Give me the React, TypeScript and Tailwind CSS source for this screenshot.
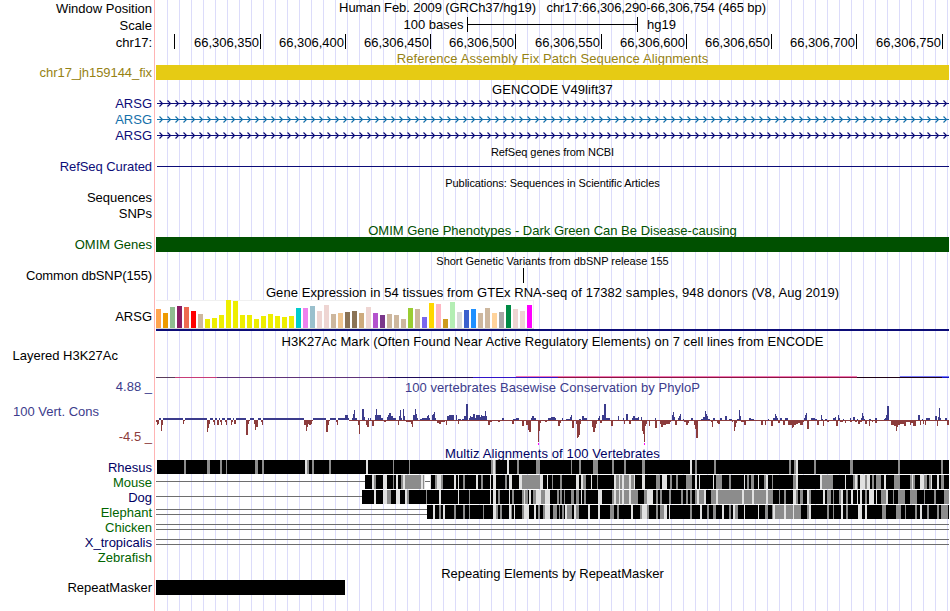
import type { ReactNode } from 'react';
import { clsx } from 'clsx';

// Tracks share one x axis: user units are browser pixels, starting at TRACK_X
const TRACK_X = 155;
const TRACK_W = 795;
const RIGHT = 949;

const NAVY = '#0c0c78';

const TICKS = [
  { x: 174, label: '' },
  { x: 260, label: '66,306,350' },
  { x: 345, label: '66,306,400' },
  { x: 430, label: '66,306,450' },
  { x: 515, label: '66,306,500' },
  { x: 601, label: '66,306,550' },
  { x: 686, label: '66,306,600' },
  { x: 771, label: '66,306,650' },
  { x: 856, label: '66,306,700' },
  { x: 942, label: '66,306,750' },
];

// one entry per GTEx tissue: [height, colour]
const TISSUES: [number, string][] = [
  [19, '#ffa54f'], [15, '#ee9a00'], [21, '#8fbc8f'], [22, '#8b1c62'], [21, '#ee6a50'], [17, '#ff0000'],
  [14, '#cdb79e'], [9, '#eeee00'], [10, '#eeee00'], [13, '#eeee00'], [28, '#eeee00'], [27, '#eeee00'],
  [13, '#eeee00'], [13, '#eeee00'], [9, '#eeee00'], [12, '#eeee00'], [14, '#eeee00'], [12, '#eeee00'],
  [11, '#eeee00'], [12, '#eeee00'], [20, '#00cdcd'], [20, '#ee82ee'], [22, '#9ac0cd'], [17, '#eed5d2'],
  [23, '#eed5d2'], [14, '#cdb79e'], [15, '#eec591'], [16, '#8b7355'], [17, '#8b7355'], [15, '#cdaa7d'],
  [21, '#eed5d2'], [15, '#b452cd'], [13, '#7a378b'], [14, '#cdb79e'], [13, '#cdb79e'], [9, '#cdb79e'],
  [20, '#9acd32'], [19, '#cdb79e'], [11, '#7a67ee'], [25, '#ffd700'], [24, '#ffb6c1'], [9, '#cd9b1d'],
  [26, '#b4eeb4'], [16, '#d9d9d9'], [18, '#3a5fcd'], [19, '#1e90ff'], [15, '#cdb79e'], [20, '#cdb79e'],
  [15, '#ffd39b'], [16, '#a6a6a6'], [23, '#008b45'], [19, '#eed5d2'], [17, '#eed5d2'], [23, '#ff00ff'],
];

// [x, width, colour]
const H3K27AC: [number, number, string][] = [
  [156, 19, '#5a3c5a'], [175, 42, '#c83c78'], [217, 171, '#5f3278'], [388, 85, '#1e0a5a'],
  [473, 85, '#3214c8'], [558, 299, '#8c1440'], [857, 85, '#1e0014'], [942, 7, '#1414c8'],
];

// "x,width,height" triples
const CONS_UP = `159,2,2 163,20,2 185,22,2 210,3,2 215,2,2 219,1,2 222,3,2 227,4,2 233,1,2 236,10,2 250,4,2 258,3,2
263,41,2 313,13,2 330,6,2 338,7,2 345,3,5 348,1,2 352,1,2 353,1,6 354,1,10 355,2,2 362,2,11 364,1,3 368,1,2 370,1,2
375,1,5 376,1,11 377,4,5 381,2,2 387,1,3 388,1,5 389,2,7 391,2,4 393,3,2 399,1,4 400,1,10 401,1,2 403,1,11 404,1,4
413,2,5 415,1,11 416,1,6 417,1,2 420,2,1 422,5,2 427,1,4 428,1,5 429,1,2 432,1,5 433,1,6 434,1,8 435,1,2 447,2,4
449,5,5 456,1,5 458,3,1 462,2,1 464,2,4 466,2,16 469,1,2 470,1,4 471,2,3 473,2,6 475,1,2 476,4,5 480,1,3 481,1,5
482,3,4 485,1,9 486,1,4 502,2,2 513,3,1 516,3,2 531,1,2 532,2,4 534,2,2 548,3,2 551,4,3 555,1,2 562,1,2 566,4,1
570,1,3 571,1,5 579,2,1 582,2,4 584,3,2 598,1,2 599,1,4 602,2,5 604,2,16 606,4,2 618,1,4 623,1,2 626,2,6 632,1,2
633,2,4 635,3,2 638,1,3 641,1,3 655,1,2 672,1,5 673,1,8 674,1,3 678,1,2 679,1,4 680,1,6 683,1,1 691,2,2 701,2,1
703,2,3 705,1,9 706,1,6 707,1,4 708,2,1 713,2,2 720,2,2 725,2,4 729,3,1 737,2,1 739,1,10 740,1,4 749,2,2 751,3,1
768,1,1 773,2,2 775,1,6 776,1,4 777,1,2 780,2,2 785,3,2 804,1,2 805,1,5 806,1,7 811,4,2 815,2,1 821,1,5 822,1,1
825,2,1 833,2,2 835,1,3 838,1,5 839,1,2 843,1,1 850,1,2 853,2,3 857,1,1 861,1,2 862,1,7 863,1,4 864,1,1 869,2,1
875,2,2 884,1,1 885,1,2 886,1,5 887,2,14 918,2,5 922,1,1 926,4,2 935,2,4 938,1,3 939,1,12 940,1,2 945,2,2`;

const CONS_DOWN = `156,1,2 157,1,5 158,1,4 161,1,11 162,1,5 183,1,4 184,1,1 207,1,12 208,1,8 209,1,4 213,1,2 214,1,5
217,2,5 220,1,2 221,1,5 225,1,2 226,1,5 231,1,5 232,1,2 234,2,4 246,2,15 248,1,4 249,1,1 254,1,4 255,1,10 256,2,7
261,1,2 262,1,5 304,2,5 306,1,11 307,1,7 308,1,4 309,2,5 311,1,4 312,1,1 326,2,12 328,1,5 329,1,1 336,1,2 337,1,5
358,1,5 359,1,14 366,1,5 367,2,7 372,2,6 384,2,2 398,1,5 406,5,2 411,1,4 412,1,7 437,2,3 439,2,4 441,4,2 446,1,5
458,1,4 488,2,5 490,2,2 498,2,2 512,2,4 522,2,6 526,2,5 528,1,10 529,2,12 538,1,22 539,1,11 540,1,3 545,2,2
558,2,6 560,1,3 572,2,8 576,1,4 577,1,18 578,1,17 579,1,15 580,1,4 592,1,7 593,2,12 595,1,8 596,1,4 600,2,3
611,2,6 624,1,4 629,2,4 642,1,11 643,1,14 644,1,22 645,1,6 646,1,4 649,1,6 655,2,8 660,1,4 661,2,7 663,3,5
666,4,4 670,1,2 675,2,5 684,2,2 686,2,5 688,1,3 694,1,5 695,1,9 696,2,18 711,1,2 712,1,7 717,1,3 718,2,4 732,1,2
734,1,11 735,1,7 736,1,3 741,3,2 744,2,5 761,2,5 765,1,5 771,2,6 778,2,3 783,2,5 788,4,5 792,1,8 793,1,7 794,2,5
796,2,4 798,2,3 800,3,5 803,1,2 807,2,9 817,2,5 823,1,6 827,2,2 836,2,6 840,3,2 845,1,3 850,2,2 855,2,2 858,2,4
860,2,2 865,2,4 869,1,6 872,1,2 875,2,3 891,3,5 894,2,6 896,1,11 897,1,7 898,2,5 900,4,4 904,2,6 906,4,2 910,1,5
911,2,3 913,3,6 920,1,5 923,1,4 925,1,5 937,1,6 947,2,5`;

// mismatch columns, g = weak, l = very weak: "kind x,width"
const RHESUS = `g184,2 g207,3 g220,2 g226,1 g255,3 g262,2 l305,2 g307,2 g312,2 g329,2 l366,2 g393,1 g409,1 g491,2
l493,2 g495,1 l507,2 g517,2 g536,4 g571,1 g579,2 g593,5 g612,2 g624,2 g642,3 l690,2 g695,2 g714,2 g789,2 g794,2
l796,2 g814,2 g850,3 g898,2 g941,2`;

const MOUSE = `l372,2 g374,2 l383,4 g393,1 l396,2 g401,2 l403,2 g405,16 l421,2 g423,1 l424,1 w425,5 l430,1 g435,2
l437,4 g441,2 l454,2 l458,1 g463,2 l476,2 g481,2 l490,1 l493,3 g505,2 l509,3 l519,3 g522,18 l540,3 l547,1 g552,1
g560,2 l576,3 l581,2 g583,3 l591,1 g597,1 l614,2 g616,3 l619,1 g620,2 l622,2 g624,5 l629,2 g631,3 l634,1 l642,3
g656,4 l662,5 g670,2 g676,2 g686,6 l695,2 l699,1 l713,1 g716,6 g729,2 l744,1 g747,2 g751,3 l758,1 g764,2 l766,2
g772,1 g793,3 l796,2 l820,2 g822,11 l845,1 g853,2 l855,2 g857,1 l860,5 g865,2 l867,3 g872,2 g876,5 l884,2 g894,6
g910,2 l912,1 g913,2 l920,4 g924,3 g929,2 l931,1 l937,2 g941,3`;

const DOG = `l374,2 l383,4 g387,4 l396,4 l405,2 g407,2 g426,1 l439,2 l458,1 g469,1 l490,1 l493,3 g498,2 l509,1 g512,2
g522,2 l524,1 g525,3 l529,2 g533,3 l536,5 g541,4 l545,5 g557,2 g560,2 g564,1 g571,3 g576,3 l581,1 g584,2 l598,4
g612,2 l614,2 g616,3 l619,1 g620,2 l622,2 g624,5 l629,2 g631,7 g644,3 l647,6 g656,2 g660,2 g669,2 g681,2 g686,2
g690,2 g695,2 l697,2 g699,5 l704,2 g711,5 l716,2 g718,24 l742,2 g744,8 l752,2 g754,12 l766,2 g768,5 g779,1 g784,2
l793,3 g796,2 g800,3 l807,2 g809,2 l823,2 g827,4 g833,1 g839,2 l841,2 g846,2 l851,2 l857,1 l860,2 g865,2 l869,5
l876,1 g881,5 l886,2 g893,1 g898,7 g910,7 g924,1 g934,2 g944,5`;

const ELEPHANT = `l433,2 g439,2 l443,2 g454,2 g463,2 g469,1 g483,1 l493,3 g496,2 g500,2 l509,2 g511,1 l514,1 g522,2
l524,5 l534,2 g538,2 g543,2 l545,5 g553,4 g559,1 g562,2 l565,2 g567,5 l574,2 g576,3 l588,2 l598,2 g610,4 g617,2
l631,2 g640,2 l642,5 g647,2 g656,2 g660,4 l664,3 l669,1 g690,2 l700,2 g707,2 g713,3 l722,2 g729,2 l733,2 g735,3
l744,1 l758,1 g765,3 g772,1 l773,2 g775,9 l784,2 g786,7 l793,1 g794,7 g807,2 l809,2 g827,2 g833,1 l841,2 g846,2
l858,4 l865,2 g882,4 g896,5 g905,1 g915,2 l920,2 g927,2 g937,2 g941,7`;

const SHADES: Record<string, string> = { g: '#8c8c8c', l: '#e1e1e1', w: '#ffffff' };

const ARROWS = Array.from({ length: 99 }, (_, i) => 159.5 + i * 8).map(x => `M${x} 4.5l3 3l-3 3`).join('');

function triples(text: string) {
  return text.trim().split(/\s+/).map(t => t.split(',').map(Number));
}

interface RowProps {
  height: string;
  label?: string;
  labelClass?: string;
  children?: ReactNode;
}

/** One strip of the browser: name on the left, data on the right. */
function Row({ height, label, labelClass, children }: RowProps) {
  return (
    <div className={clsx('flex', height)}>
      <div className={clsx('w-[155px] shrink-0 text-right whitespace-pre', labelClass?.includes('pr-') ? '' : 'pr-[3px]', labelClass)}>
        {label}
      </div>
      <div className="w-[795px] shrink-0">{children}</div>
    </div>
  );
}

function Title({ height, className, children }: { height: string; className?: string; children: ReactNode }) {
  return (
    <Row height={height}>
      <div className={clsx('text-center whitespace-pre', className)}>{children}</div>
    </Row>
  );
}

function Plot({ height, children }: { height: number; children: ReactNode }) {
  return (
    <svg
      width={TRACK_W}
      height={height}
      viewBox={`${TRACK_X} 0 ${TRACK_W} ${height}`}
      className="block overflow-visible"
      shapeRendering="crispEdges"
    >
      {children}
    </svg>
  );
}

function Block({ from = 156, to = RIGHT, color }: { from?: number; to?: number; color: string }) {
  return (
    <Plot height={15}>
      <rect x={from} y={0} width={to - from} height={15} fill={color} />
    </Plot>
  );
}

function GeneTrack({ color }: { color: string }) {
  return (
    <Plot height={16}>
      <rect x={157} y={7} width={RIGHT - 157} height={1} fill={color} />
      <path d={ARROWS} fill="none" stroke={color} strokeWidth={1.15} shapeRendering="auto" />
    </Plot>
  );
}

function Alignment({ start, gaps, columns = '' }: { start?: number; gaps: number[]; columns?: string }) {
  return (
    <Plot height={15}>
      {start && (
        <>
          <rect x={start} y={0} width={RIGHT - start} height={14} fill="#000" />
          {columns.trim().split(/\s+/).map(c => {
            const [x, w] = c.slice(1).split(',').map(Number);
            return <rect key={c} x={x} y={0} width={w} height={14} fill={SHADES[c[0]]} />;
          })}
          {columns.includes('w425') && <rect x={425} y={6} width={5} height={1} fill="#6e6e6e" />}
        </>
      )}
      {gaps.map(y => (
        <rect key={y} x={156} y={y} width={(start ?? RIGHT) - 156} height={1} fill="#6e6e6e" />
      ))}
    </Plot>
  );
}

export default function App() {
  return (
    <div className="relative h-[611px] w-[950px] overflow-hidden bg-white font-['Liberation_Sans',Arial,sans-serif] text-[13px] leading-[15px] text-black">
      {/* guide lines */}
      <div className="absolute inset-y-0 left-[154px] w-px bg-[#ffb4b4]" />
      <div className="absolute inset-y-0 left-[156px] w-[793px] bg-[repeating-linear-gradient(to_right,transparent_0px,transparent_11px,#dcdcfa_11px,#dcdcfa_12px)]" />

      <div className="relative flex flex-col">
        {/* Position header */}
        <Row height="h-[17px]" label="Window Position" labelClass="pt-px">
          <div className="text-center tracking-[-0.09px] whitespace-pre">
            Human Feb. 2009 (GRCh37/hg19)   chr17:66,306,290-66,306,754 (465 bp)
          </div>
        </Row>
        <Row height="h-[17px]" label="Scale" labelClass="pt-px">
          <Plot height={17}>
            <text x={463.5} y={12} textAnchor="end">100 bases</text>
            <rect x={467} y={0} width={1} height={15} />
            <rect x={467} y={7} width={171} height={1} />
            <rect x={637} y={0} width={1} height={15} />
            <text x={647} y={12}>hg19</text>
          </Plot>
        </Row>
        <Row height="h-[16px]" label="chr17:" labelClass="pt-px">
          <Plot height={16}>
            {TICKS.map(({ x, label }) => (
              <g key={x}>
                <rect x={x} y={0} width={1} height={15} />
                {label && <text x={x - 1} y={13} textAnchor="end">{label}</text>}
              </g>
            ))}
          </Plot>
        </Row>

        <Title height="h-[15px]" className="pt-px tracking-[0.11px] text-[#968214]">
          Reference Assembly Fix Patch Sequence Alignments
        </Title>
        <Row height="h-[15px]" label="chr17_jh159144_fix" labelClass="tracking-[-0.06px] text-[#968214]">
          <Block color="#e6cb14" />
        </Row>

        <Title height="h-[16px]" className="pt-[2px] tracking-[0.05px]">GENCODE V49lift37</Title>
        <Row height="h-[16px]" label="ARSG" labelClass="text-[#0c0c78]"><GeneTrack color={NAVY} /></Row>
        <Row height="h-[16px]" label="ARSG" labelClass="text-[#1470aa]"><GeneTrack color="#1470aa" /></Row>
        <Row height="h-[16px]" label="ARSG" labelClass="text-[#0c0c78]"><GeneTrack color={NAVY} /></Row>

        <Title height="h-[15px]" className="pt-[1px] text-[11px] tracking-[-0.04px]">RefSeq genes from NCBI</Title>
        <Row height="h-[15px]" label="RefSeq Curated" labelClass="tracking-[-0.07px] text-[#0c0c78]">
          <Plot height={15}>
            <rect x={157} y={7} width={RIGHT - 157} height={1} fill={NAVY} />
          </Plot>
        </Row>

        <Title height="h-[16px]" className="pt-[2px] text-[11px] tracking-[-0.07px]">
          Publications: Sequences in Scientific Articles
        </Title>
        <Row height="h-[16px]" label="Sequences" />
        <Row height="h-[16px]" label="SNPs" />

        <Title height="h-[15px]" className="pt-px text-[#005000]">OMIM Gene Phenotypes - Dark Green Can Be Disease-causing</Title>
        <Row height="h-[15px]" label="OMIM Genes" labelClass="text-[#005000]">
          <Block color="#005000" />
        </Row>

        <Title height="h-[16px]" className="pt-[2px] text-[11px] tracking-[-0.02px]">
          Short Genetic Variants from dbSNP release 155
        </Title>
        <Row height="h-[16px]" label="Common dbSNP(155)" labelClass="tracking-[-0.11px]">
          <Block from={523} to={524} color="#000" />
        </Row>

        {/* GTEx expression */}
        <Title height="h-[16px]" className="pt-px tracking-[0.065px]">
          Gene Expression in 54 tissues from GTEx RNA-seq of 17382 samples, 948 donors (V8, Aug 2019)
        </Title>
        <Row height="h-[31px]" label="ARSG" labelClass="pt-[9px]">
          <Plot height={31}>
            <rect x={156} y={0} width={378} height={29} fill="#f0f0f0" />
            <rect x={156} y={1} width={377} height={27} fill="#fff" />
            <rect x={156} y={28} width={378} height={1} fill="#d2d2d2" />
            {TISSUES.map(([h, color], i) => (
              <rect key={i} x={156 + i * 7} y={28 - h} width={5} height={h} fill={color} />
            ))}
            <rect x={156} y={29} width={RIGHT - 156} height={2} fill={NAVY} />
          </Plot>
        </Row>

        {/* Histone mark overlay */}
        <Title height="h-[17px]" className="pt-[3px] tracking-[0.05px]">
          H3K27Ac Mark (Often Found Near Active Regulatory Elements) on 7 cell lines from ENCODE
        </Title>
        <Row height="h-[31px]" label="Layered H3K27Ac" labelClass="pr-[37px]">
          <Plot height={31}>
            <rect x={516} y={28} width={341} height={1} fill="#f078b4" />
            <rect x={900} y={28} width={49} height={1} fill="#7878fa" />
            {H3K27AC.map(([x, w, color]) => (
              <rect key={x} x={x} y={29} width={w} height={1} fill={color} />
            ))}
          </Plot>
        </Row>

        {/* PhyloP conservation */}
        <Row height="h-[16px]" label="4.88 _" labelClass="text-[#3c3c8c]">
          <div className="pt-px text-center tracking-[0.07px] text-[#3c3c8c]">
            100 vertebrates Basewise Conservation by PhyloP
          </div>
        </Row>
        <div className="flex h-[50px]">
          <div className="flex w-[155px] shrink-0 flex-col pt-[9px] pr-[3px]">
            <span className="pl-[13px] text-[#3c3c8c]">100 Vert. Cons</span>
            <span className="pt-[10px] text-right text-[#8c3c3c]">-4.5 _</span>
          </div>
          <Plot height={50}>
            <rect x={349} y={25} width={600} height={1} fill="#8c3c3c" />
            {triples(CONS_UP).map(([x, w, h]) => (
              <rect key={x} x={x} y={25 - h} width={w} height={h} fill="#3c3c8c" />
            ))}
            {triples(CONS_DOWN).map(([x, w, h]) => (
              <rect key={x} x={x} y={25} width={w} height={h} fill="#8c3c3c" />
            ))}
            <rect x={538} y={48} width={1} height={2} fill="#ff00ff" />
            <rect x={644} y={48} width={1} height={2} fill="#ff00ff" />
          </Plot>
        </div>

        {/* Multiz alignment */}
        <Title height="h-[15px]" className="pt-px tracking-[0.11px] text-[#000064]">Multiz Alignments of 100 Vertebrates</Title>
        <Row height="h-[15px]" label="Rhesus" labelClass="text-[#000064]"><Alignment start={157} gaps={[]} columns={RHESUS} /></Row>
        <Row height="h-[15px]" label="Mouse" labelClass="text-[#006400]"><Alignment start={365} gaps={[6]} columns={MOUSE} /></Row>
        <Row height="h-[15px]" label="Dog" labelClass="text-[#000064]"><Alignment start={362} gaps={[6]} columns={DOG} /></Row>
        <Row height="h-[15px]" label="Elephant" labelClass="text-[#006400]"><Alignment start={427} gaps={[4, 9]} columns={ELEPHANT} /></Row>
        <Row height="h-[15px]" label="Chicken" labelClass="text-[#006400]"><Alignment gaps={[4, 9]} /></Row>
        <Row height="h-[15px]" label="X_tropicalis" labelClass="text-[#000064]"><Alignment gaps={[4, 9]} /></Row>
        <Row height="h-[15px]" label="Zebrafish" labelClass="text-[#006400]" />

        <Title height="h-[15px]" className="pt-px">Repeating Elements by RepeatMasker</Title>
        <Row height="h-[15px]" label="RepeatMasker"><Block to={345} color="#000" /></Row>
      </div>
    </div>
  );
}
